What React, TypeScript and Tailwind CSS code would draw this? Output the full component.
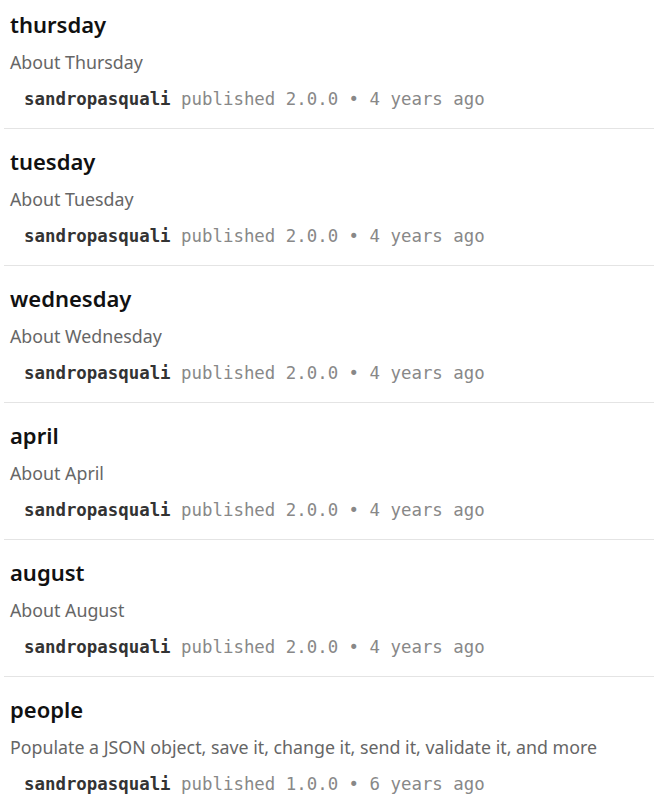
import React from "react";

type Pkg = { name: string; desc: string; version: string; ago: string };

const pkgs: Pkg[] = [
  { name: "thursday", desc: "About Thursday", version: "2.0.0", ago: "4 years ago" },
  { name: "tuesday", desc: "About Tuesday", version: "2.0.0", ago: "4 years ago" },
  { name: "wednesday", desc: "About Wednesday", version: "2.0.0", ago: "4 years ago" },
  { name: "april", desc: "About April", version: "2.0.0", ago: "4 years ago" },
  { name: "august", desc: "About August", version: "2.0.0", ago: "4 years ago" },
  {
    name: "people",
    desc: "Populate a JSON object, save it, change it, send it, validate it, and more",
    version: "1.0.0",
    ago: "6 years ago",
  },
];

export default function App() {
  return (
    <div className="bg-white w-[654px] h-[809px] overflow-hidden pl-[4px]">
      {pkgs.map((p, i) => (
        <div
          key={p.name}
          className={`border-b border-[#e4e4e4] pb-[16px] ${i === 0 ? "pt-[9px]" : "pt-[17px]"}`}
        >
          <div
            className="pl-[6px] h-[30px] leading-[30px] text-[22px] font-semibold text-[#111111]"
            style={{ fontFamily: '"Noto Sans", sans-serif' }}
          >
            {p.name}
          </div>
          <div
            className="pl-[6px] mt-[10px] h-[26px] leading-[26px] text-[17.8px] text-[#666666]"
            style={{ fontFamily: '"Noto Sans", sans-serif' }}
          >
            {p.desc}
          </div>
          <div
            className="pl-[20px] mt-[11px] h-[26px] leading-[26px] text-[17.4px] whitespace-nowrap"
            style={{ fontFamily: '"DejaVu Sans Mono", monospace' }}
          >
            <span className="font-bold text-[#333333]">sandropasquali</span>
            <span className="text-[#888888]"> published {p.version} • {p.ago}</span>
          </div>
        </div>
      ))}
    </div>
  );
}
